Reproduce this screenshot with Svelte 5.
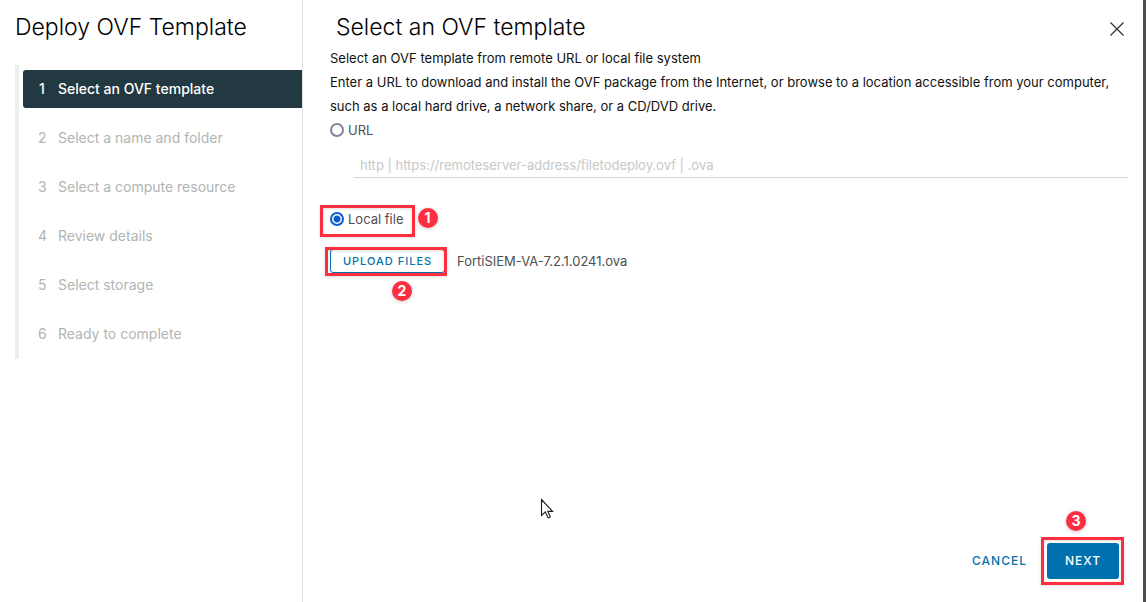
<script>
  const steps = [
    'Select an OVF template',
    'Select a name and folder',
    'Select a compute resource',
    'Review details',
    'Select storage',
    'Ready to complete'
  ];
  let current = $state(0);
  let source = $state('local');
  let url = $state('');
  const fileName = 'FortiSIEM-VA-7.2.1.0241.ova';
</script>

<div class="wizard">
  <aside>
    <h1>Deploy OVF Template</h1>
    <ol>
      {#each steps as step, i}
        <li>
          <button class="step" class:active={i === current} onclick={() => (current = i)}>
            <span class="num">{i + 1}</span><span>{step}</span>
          </button>
        </li>
      {/each}
    </ol>
  </aside>

  <main>
    <header>
      <h2>Select an OVF template</h2>
      <button class="close" aria-label="Close">
        <svg width="16" height="16" viewBox="0 0 16 16" aria-hidden="true">
          <path d="M1.5 1.5 14.5 14.5M14.5 1.5 1.5 14.5" fill="none" stroke="#333" stroke-width="1.3" />
        </svg>
      </button>
    </header>

    <p>Select an OVF template from remote URL or local file system</p>
    <p>
      Enter a URL to download and install the OVF package from the Internet, or browse to a location accessible from your computer,
      such as a local hard drive, a network share, or a CD/DVD drive.
    </p>

    <div class="option">
      <label><input type="radio" name="source" value="url" bind:group={source} />URL</label>
    </div>
    <input
      class="url"
      type="text"
      aria-label="URL"
      placeholder="http | https://remoteserver-address/filetodeploy.ovf | .ova"
      bind:value={url}
    />

    <div class="option">
      <label class="marked local">
        <input type="radio" name="source" value="local" bind:group={source} />Local file
        <span class="badge">1</span>
      </label>
    </div>

    <div class="upload">
      <span class="marked files">
        <button class="outline">UPLOAD FILES</button>
        <span class="badge">2</span>
      </span>
      <span>{fileName}</span>
    </div>

    <svg class="cursor" width="14" height="21" viewBox="0 0 14 21" aria-hidden="true">
      <path
        d="M1.5 1.5v16l3.8-3.6 2.6 5.6c.9.6 2.4 0 2.3-1.1l-2.4-5h4.8z"
        fill="#fff"
        stroke="#1c1c28"
        stroke-width="1.1"
      />
    </svg>

    <footer>
      <button class="cancel">CANCEL</button>
      <span class="marked next">
        <button class="primary">NEXT</button>
        <span class="badge">3</span>
      </span>
    </footer>
  </main>
</div>

<style>
  .wizard {
    display: flex;
    box-sizing: border-box;
    min-height: 100vh;
    border-right: 3px solid #4b4f50;
    background: #fff;
    color: #111;
    font: 13px/24px Inter, 'Open Sans', sans-serif;
  }
  button,
  input {
    font: inherit;
    margin: 0;
  }
  button {
    padding: 0;
    border: 0;
    background: none;
    cursor: pointer;
  }
  h1,
  h2 {
    margin: 0;
    font-size: 23px;
    font-weight: 300;
    line-height: 32px;
    color: #000;
  }
  aside {
    flex: 0 0 302px;
    padding: 11px 0 0 15px;
    box-sizing: border-box;
  }
  ol {
    display: flex;
    flex-direction: column;
    gap: 11px;
    margin: 22px 0 0;
    padding: 5px 0 6px 4px;
    list-style: none;
    border-left: 4px solid #ebf0ef;
  }
  .step {
    display: flex;
    align-items: center;
    gap: 12px;
    width: 100%;
    height: 38px;
    padding-left: 15px;
    border-radius: 3px 0 0 3px;
    color: #b1b5b4;
    font-size: 14px;
    text-align: left;
  }
  .step.active {
    background: #233941;
    color: #fff;
    font-weight: 500;
  }
  .num {
    width: 8px;
    text-align: center;
  }
  main {
    display: flex;
    flex: 1;
    flex-direction: column;
    min-width: 0;
    padding: 11px 15px 18px 27px;
    border-left: 1px solid #dedede;
  }
  header {
    display: flex;
    justify-content: space-between;
    height: 31px;
    margin-bottom: 4px;
    padding-left: 6px;
  }
  .close {
    width: 22px;
    height: 36px;
    line-height: 0;
  }
  p {
    margin: 0;
  }
  .option {
    display: flex;
    color: #4d4f50;
  }
  label {
    display: flex;
    align-items: center;
    gap: 4px;
  }
  input[type='radio'] {
    appearance: none;
    width: 14px;
    height: 14px;
    border: 2px solid #83869a;
    border-radius: 50%;
    background: #fff;
  }
  input[type='radio']:checked {
    border-color: #0b5bd3;
    background: radial-gradient(circle, #0b5bd3 3px, #fff 4px);
  }
  .url {
    height: 24px;
    margin: 11px 0 29px 24px;
    padding: 0 6px;
    border: 0;
    border-bottom: 1px solid #d6d6d6;
    outline: 0;
    background: none;
  }
  .url::placeholder {
    color: #c6c9c7;
    opacity: 1;
  }
  .marked {
    position: relative;
  }
  .marked::after {
    content: '';
    position: absolute;
    border: 3px solid #fc2e40;
    box-shadow: 0 1px 3px #0002, inset 0 1px 3px #0002;
    pointer-events: none;
  }
  .local::after {
    inset: -2px -11px -6px -10px;
  }
  .files::after {
    inset: -2px -2px -3px -5px;
  }
  .next::after {
    inset: -6px -5px -6px -6px;
  }
  .badge {
    position: absolute;
    width: 20px;
    height: 20px;
    border-radius: 50%;
    background: #fc2e40;
    box-shadow: 0 1px 4px #0003;
    color: #fff;
    font-size: 14px;
    font-weight: 700;
    line-height: 20px;
    text-align: center;
  }
  .local .badge {
    top: 1px;
    right: -34px;
  }
  .files .badge {
    top: 32px;
    left: 62px;
  }
  .next .badge {
    top: -32px;
    left: 19px;
  }
  .upload {
    display: flex;
    align-items: center;
    gap: 12px;
    margin-top: 18px;
    color: #4d4f50;
  }
  .marked.files {
    display: flex;
  }
  .outline {
    width: 115px;
    height: 24px;
    border: 1px solid #0072ad;
    border-radius: 3px;
    color: #0072ad;
    font-size: 11px;
    font-weight: 500;
    letter-spacing: 1px;
    line-height: 20px;
  }
  .cursor {
    position: absolute;
    top: 498px;
    left: 540px;
    pointer-events: none;
  }
  footer {
    display: flex;
    align-items: center;
    justify-content: flex-end;
    gap: 20px;
    margin-top: auto;
    padding: 0 9px 5px 0;
  }
  .cancel {
    color: #0072ad;
    font-size: 12px;
    font-weight: 500;
    letter-spacing: 1px;
  }
  .marked.next {
    display: flex;
  }
  .primary {
    width: 72px;
    height: 36px;
    border-radius: 3px;
    background: #0070ae;
    color: #fff;
    font-size: 12px;
    font-weight: 500;
    letter-spacing: 1px;
  }
</style>
